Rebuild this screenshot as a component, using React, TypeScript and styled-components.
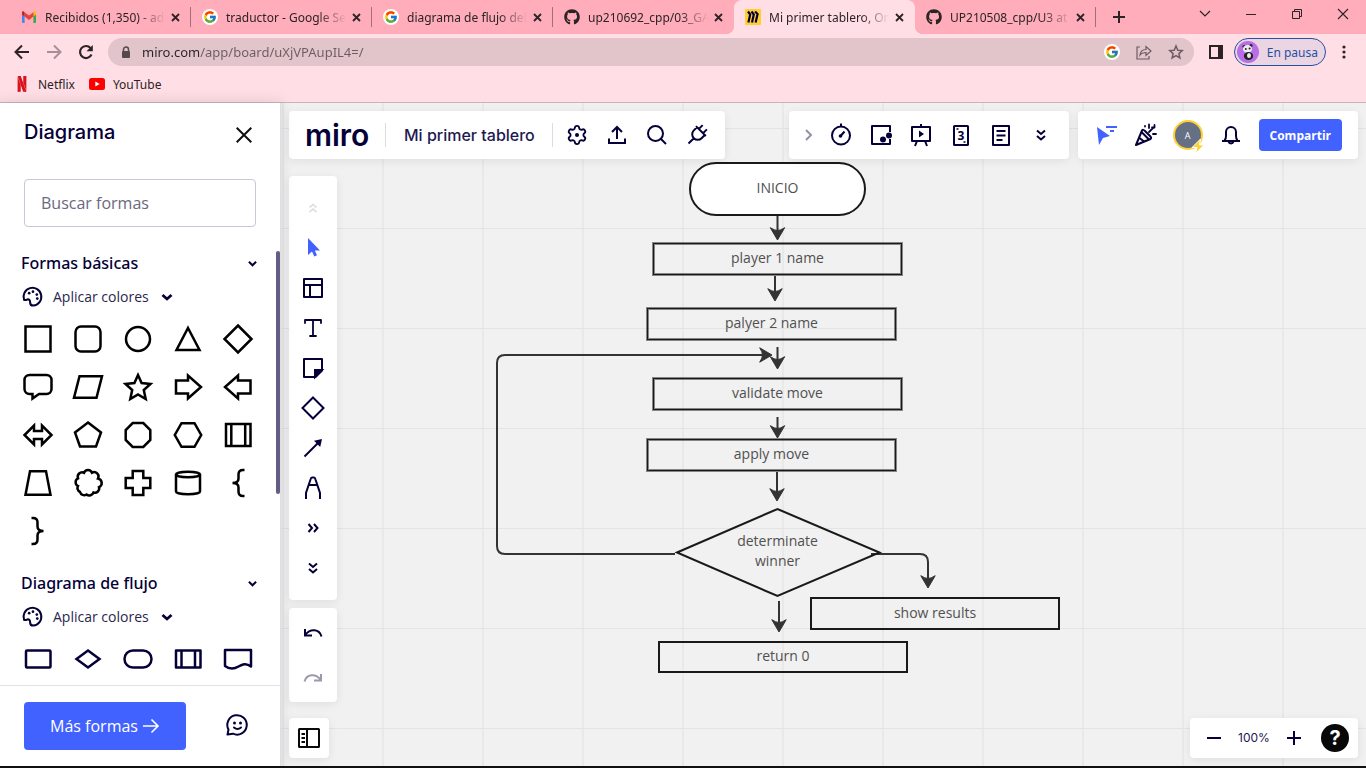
import React from 'react';
import styled, { createGlobalStyle, css } from 'styled-components';
import { FcGoogle } from 'react-icons/fc';
import { FaGithub } from 'react-icons/fa';
import { SiNetflix } from 'react-icons/si';

const ink = '#050038';
const blue = '#4262ff';
const uiFont = '"Open Sans", "Noto Sans", sans-serif';
const chromeFont = '"Noto Sans", "Open Sans", sans-serif';
const brandFont = 'Inter, "Open Sans", sans-serif';

const GlobalStyle = createGlobalStyle`
  *, *::before, *::after { box-sizing: border-box; }
  body { margin: 0; font-family: ${uiFont}; color: ${ink}; }
  button { border: 0; padding: 0; background: none; color: inherit; font: inherit; cursor: pointer; }
  a { color: inherit; text-decoration: none; }
  h1, h2 { margin: 0; }
  svg { display: block; flex: none; }
`;

/* ---------- page ---------- */

const Page = styled.div`
  display: flex;
  flex-direction: column;
  height: 100vh;
  min-height: 640px;
  border-bottom: 2px solid #101010;
  overflow: hidden;
`;

/* ---------- browser frame ---------- */

const Browser = styled.header`
  flex: none;
  background: #ffdfe5;
  border-bottom: 1px solid #c9b4bb;
  font-family: ${chromeFont};
  color: #2b2325;
`;

const TabStrip = styled.div`
  display: flex;
  height: 34px;
  padding-left: 10px;
  background: #ffacbb;
`;

const TabBox = styled.div<{ $active?: boolean; $divider?: boolean }>`
  position: relative;
  display: flex;
  align-items: center;
  flex: 0 1 181px;
  min-width: 0;
  padding: 0 8px 0 11px;
  ${p => p.$divider && css`
    &::after {
      content: '';
      position: absolute;
      right: 0;
      top: 7px;
      width: 1px;
      height: 20px;
      background: #a2707a;
    }
  `}
  ${p => p.$active && css`
    background: #ffdfe5;
    border-radius: 8px 8px 0 0;
    &::before, &::after {
      content: '';
      position: absolute;
      bottom: 0;
      width: 8px;
      height: 8px;
    }
    &::before { left: -8px; background: radial-gradient(circle at 0 0, transparent 8px, #ffdfe5 8px); }
    &::after { right: -8px; background: radial-gradient(circle at 100% 0, transparent 8px, #ffdfe5 8px); }
  `}
`;

const TabTitle = styled.button`
  display: flex;
  align-items: center;
  gap: 8px;
  flex: 1;
  min-width: 0;
  height: 34px;
  font-size: 12px;
  text-align: left;
`;

const TabText = styled.span`
  flex: 1;
  overflow: hidden;
  white-space: nowrap;
  mask-image: linear-gradient(90deg, #000 calc(100% - 28px), transparent);
`;

const Favicon = styled.span<{ $round?: boolean }>`
  display: flex;
  align-items: center;
  justify-content: center;
  flex: none;
  width: 16px;
  height: 16px;
  border-radius: ${p => (p.$round ? '50%' : '0')};
  background: ${p => (p.$round ? '#fff' : 'transparent')};
`;

const TinyButton = styled.button`
  display: flex;
  align-items: center;
  justify-content: center;
  width: 16px;
  height: 16px;
  margin-left: 2px;
`;

const NewTab = styled(TinyButton)`
  width: 28px;
  height: 34px;
  margin-left: 9px;
`;

const WindowButtons = styled.div`
  display: flex;
  margin-left: auto;
`;

const WindowButton = styled.button`
  display: flex;
  align-items: center;
  justify-content: center;
  width: 46px;
  height: 28px;
`;

const NavRow = styled.div`
  display: flex;
  align-items: center;
  height: 36px;
  padding: 0 4px 0 6px;
`;

const NavButton = styled.button<{ $w?: number }>`
  display: flex;
  align-items: center;
  justify-content: center;
  flex: none;
  width: ${p => p.$w ?? 32}px;
  height: 28px;
`;

const AddressBar = styled.label`
  display: flex;
  align-items: center;
  flex: 1;
  height: 28px;
  margin: 0 6px;
  padding: 0 2px 0 12px;
  border-radius: 14px;
  background: #e1c5ca;
`;

const AddressInput = styled.input`
  flex: 1;
  min-width: 0;
  margin-left: 10px;
  padding: 0;
  border: 0;
  outline: 0;
  font: 13px/20px ${chromeFont};
  color: transparent;
  background: linear-gradient(90deg, #2b2325 57px, #6d5b60 57px);
  -webkit-background-clip: text;
  background-clip: text;
`;

const Profile = styled.button`
  display: flex;
  align-items: center;
  gap: 8px;
  height: 28px;
  margin-left: 2px;
  padding: 0 7px 0 2px;
  border: 1px solid #2450a4;
  border-radius: 14px;
  background: #ecd5e2;
  color: #2450a4;
  font-size: 12px;
`;

const Bookmarks = styled.nav`
  display: flex;
  align-items: center;
  gap: 14px;
  height: 32px;
  padding: 0 14px 4px;
`;

const Bookmark = styled.a`
  display: flex;
  align-items: center;
  gap: 8px;
  font-size: 12px;
`;

/* ---------- shapes panel ---------- */

const Workspace = styled.div`
  display: flex;
  flex: 1;
  min-height: 0;
`;

const Panel = styled.aside`
  position: relative;
  z-index: 2;
  display: flex;
  flex-direction: column;
  flex: none;
  width: 280px;
  background: #fff;
  box-shadow: 1px 0 0 #dedee2, 0 0 12px 2px rgba(5, 0, 56, 0.1);
`;

const PanelHeader = styled.div`
  display: flex;
  align-items: center;
  justify-content: space-between;
  height: 60px;
  padding: 0 28px 0 24px;
`;

const PanelTitle = styled.h1`
  padding-bottom: 2px;
  font: 500 20px/28px ${brandFont};
`;

const CloseButton = styled.button`
  display: flex;
  align-items: center;
  justify-content: flex-end;
  width: 32px;
  height: 32px;
  margin-top: 4px;
`;

const Search = styled.input`
  height: 48px;
  margin: 16px 24px 20px;
  padding: 0 16px;
  border: 1px solid #c9c7da;
  border-radius: 4px;
  font: 16px/24px ${uiFont};
  color: ${ink};
  &::placeholder { color: #6b6880; opacity: 1; }
`;

const ShapeList = styled.div`
  position: relative;
  flex: 1;
  min-height: 0;
  overflow: hidden;
`;

const ScrollThumb = styled.div`
  position: absolute;
  top: 4px;
  right: 0;
  width: 4px;
  height: 243px;
  border-radius: 2px;
  background: #625d85;
`;

const Section = styled.section`
  padding: 0 21px 12px;
`;

const SectionHead = styled.button`
  display: flex;
  align-items: center;
  justify-content: space-between;
  width: 100%;
  height: 32px;
  padding-right: 2px;
  font-family: "Noto Sans", "Open Sans", sans-serif;
  font-size: 16px;
  font-weight: 500;
`;

const ApplyColors = styled.button`
  display: flex;
  align-items: center;
  gap: 9px;
  height: 36px;
  padding-bottom: 1px;
  font-size: 14px;
  color: #2a2650;
  svg { color: ${ink}; }
`;

const ShapeGrid = styled.div`
  display: grid;
  grid-template-columns: repeat(5, 50px);
  grid-auto-rows: 48px;
  margin: 0 -8px;
`;

const ShapeButton = styled.button`
  display: flex;
  align-items: center;
  justify-content: center;
`;

const PanelFooter = styled.div`
  display: flex;
  align-items: center;
  justify-content: space-between;
  flex: none;
  height: 81px;
  padding: 0 30px 0 24px;
  border-top: 1px solid #e2e1e8;
`;

const MoreShapes = styled.button`
  display: flex;
  align-items: center;
  justify-content: center;
  gap: 4px;
  width: 162px;
  height: 48px;
  border-radius: 4px;
  background: ${blue};
  color: #fff;
  font-size: 16px;
`;

/* ---------- board ---------- */

const Board = styled.main`
  position: relative;
  flex: 1;
  min-width: 0;
  overflow: hidden;
  background-color: #f1f1f1;
  background-image:
    linear-gradient(#e4e4e5 1px, transparent 1px),
    linear-gradient(90deg, #e9e9ea 2px, transparent 2px);
  background-size: 100px 100px;
  background-position: 2px 25px;
`;

const Connectors = styled.svg`
  position: absolute;
  left: 0;
  top: 0;
  width: 800px;
  height: 600px;
`;

const nodeLine = '#1a1a1a';
const softLine = 'rgba(26, 26, 26, 0.5)';

const Node = styled.div<{ $x: number; $y: number; $w: number; $h: number; $kind: 'pill' | 'soft' | 'solid' | 'plain' }>`
  position: absolute;
  left: ${p => p.$x}px;
  top: ${p => p.$y}px;
  width: ${p => p.$w}px;
  height: ${p => p.$h}px;
  display: flex;
  align-items: center;
  justify-content: center;
  padding-bottom: 2px;
  font-size: 14px;
  line-height: 20px;
  text-align: center;
  color: #505050;
  ${p => p.$kind === 'pill' && css`
    border: 2px solid ${nodeLine};
    border-radius: 27px;
    background: #fff;
  `}
  ${p => p.$kind === 'solid' && css`border: 2px solid ${nodeLine};`}
  ${p => p.$kind === 'soft' && css`
    border: 1px solid ${nodeLine};
    box-shadow: 0 0 0 1px ${softLine}, inset 0 0 0 1px ${softLine};
  `}
`;

const Overlay = styled.div`
  position: absolute;
  inset: 0;
  display: flex;
  flex-direction: column;
  padding: 8px 8px 8px 9px;
`;

const TopRow = styled.div`
  display: flex;
  gap: 9px;
  margin-bottom: 17px;
`;

const Spacer = styled.div`
  flex: 1;
`;

const Card = styled.div`
  display: flex;
  align-items: center;
  flex: none;
  border-radius: 4px;
  background: #fff;
  box-shadow: 0 2px 10px rgba(5, 0, 56, 0.08);
`;

const Bar = styled(Card)`
  height: 48px;
  padding: 0 8px;
`;

const ToolColumn = styled(Card)<{ $pad: number }>`
  flex-direction: column;
  width: 48px;
  padding: ${p => p.$pad}px 0;
  margin-bottom: 8px;
`;

const ToolButton = styled.button<{ $w?: number; $h?: number; $tone?: string }>`
  display: flex;
  align-items: center;
  justify-content: center;
  width: ${p => p.$w ?? 40}px;
  height: ${p => p.$h ?? 40}px;
  color: ${p => p.$tone ?? ink};
`;

const Logo = styled.a`
  padding: 0 16px 0 8px;
  font: 600 30px/40px ${brandFont};
`;

const Divider = styled.span`
  width: 1px;
  height: 24px;
  background: #dddce6;
`;

const BoardName = styled.button`
  min-width: 166px;
  padding: 0 16px;
  font: 500 16px/24px ${brandFont};
  color: #1d1950;
`;

const BoardActions = styled.div`
  display: flex;
  margin-left: 4px;
`;

const Avatar = styled.button`
  position: relative;
  width: 30px;
  height: 30px;
  margin: 0 8px 0 7px;
  border: 2px solid #ffd02f;
  border-radius: 50%;
  background: #667085;
  color: #fff;
  font-size: 9px;
  svg { position: absolute; right: -4px; bottom: -6px; }
`;

const ShareButton = styled.button`
  height: 32px;
  margin: 0 8px;
  padding: 0 11px;
  border-radius: 4px;
  background: ${blue};
  color: #fff;
  font-size: 12px;
  font-weight: 700;
`;

const BottomRow = styled.div`
  display: flex;
  justify-content: space-between;
  margin-top: auto;
`;

const SmallCard = styled(Card)`
  height: 40px;
`;

const ZoomLabel = styled.span`
  width: 40px;
  text-align: center;
  font: 12px/20px ${brandFont};
  color: #1d1950;
`;

const HelpButton = styled.button`
  width: 28px;
  height: 28px;
  margin: 0 9px;
  border-radius: 50%;
  background: #080808;
  color: #fff;
  font: 700 20px/28px ${brandFont};
`;

/* ---------- icons ---------- */

type IconProps = { size?: number; box?: number; stroke?: number; color?: string; round?: boolean; children: React.ReactNode };

const Icon = ({ size = 24, box = 24, stroke = 2, color = 'currentColor', round, children }: IconProps) => (
  <svg
    width={size}
    height={size}
    viewBox={`0 0 ${box} ${box}`}
    fill="none"
    stroke={color}
    strokeWidth={stroke}
    strokeLinecap={round ? 'round' : 'butt'}
    strokeLinejoin={round ? 'round' : 'miter'}
    aria-hidden="true"
  >
    {children}
  </svg>
);

const Cross = ({ size, stroke }: { size: number; stroke: number }) => (
  <Icon size={size} box={size} stroke={stroke}>
    <path d={`M1 1L${size - 1} ${size - 1}M${size - 1} 1L1 ${size - 1}`} />
  </Icon>
);

const SmallChevron = () => (
  <Icon size={9} box={10} stroke={2.2}><path d="M1 3l4 4 4-4" /></Icon>
);

const GmailIcon = () => (
  <svg width="16" height="16" viewBox="0 0 16 16" aria-hidden="true">
    <path d="M1 4.5h2.6V14H2a1 1 0 0 1-1-1z" fill="#4285f4" />
    <path d="M12.4 4.5H15V13a1 1 0 0 1-1 1h-1.6z" fill="#34a853" />
    <path d="M12.4 3.2l.8-.7c.8-.6 1.8 0 1.8 1v1.9L12.4 7.5z" fill="#fbbc04" />
    <path d="M3.6 3.2l-.8-.7C2 1.9 1 2.5 1 3.5v1.9l2.6 2.1z" fill="#c5221f" />
    <path d="M3.6 3.2L8 6.6l4.4-3.4v4.3L8 11 3.6 7.5z" fill="#ea4335" />
  </svg>
);

const MiroIcon = () => (
  <svg width="16" height="16" viewBox="0 0 16 16" fill="none" stroke={ink} strokeWidth="2.2" aria-hidden="true">
    <rect width="16" height="16" rx="1" fill="#ffd02f" stroke="none" />
    <path d="M3 2.5L5.2 5.5L3.400 13.500M6.500 2.500L8.800 5.500L7 13.500M10 2.500L12.600 5L10.600 13.500" />
  </svg>
);

const PandaIcon = () => (
  <svg width="22" height="22" viewBox="0 0 22 22" aria-hidden="true">
    <circle cx="11" cy="11" r="11" fill="#b86ee6" />
    <circle cx="7" cy="5.5" r="1.6" fill="#222" />
    <circle cx="14" cy="4.5" r="1.6" fill="#222" />
    <ellipse cx="10.5" cy="8" rx="4.5" ry="3.9" fill="#eee" />
    <ellipse cx="11.5" cy="15" rx="4.6" ry="4" fill="#222" />
    <ellipse cx="12" cy="14.5" rx="2" ry="2.6" fill="#eee" />
    <circle cx="8.8" cy="8" r="1" fill="#222" />
    <circle cx="12.6" cy="7.6" r="1" fill="#222" />
  </svg>
);

const PaletteIcon = () => (
  <Icon size={23} stroke={2.1} round>
    <path d="M3.2 15.5A9.300 9.300 0 1 1 12.800 21.500C10 21.500 9.500 20.300 9.500 18c0-2.500-1.400-3.400-3-2.800-1 .3-1.500.8-3.300.3z" />
    <g fill="currentColor" stroke="none">
      <circle cx="8.500" cy="8.500" r="1.400" /><circle cx="12.500" cy="7" r="1.400" />
      <circle cx="16.500" cy="10" r="1.400" /><circle cx="17" cy="14.200" r="1.400" />
    </g>
  </Icon>
);

const BoldChevron = () => (
  <Icon size={18} box={18} stroke={2.8}><path d="M4.500 7L9 11l4.500-4" /></Icon>
);

const DoubleDown = () => (
  <Icon size={12} box={12} stroke={2}><path d="M2 1.500l4 3.500 4-3.500M2 7l4 3.500L10 7" /></Icon>
);

/* ---------- data ---------- */

const basicShapes: [string, React.ReactNode][] = [
  ['Cuadrado', <rect x="3.500" y="3.500" width="25" height="25" />],
  ['Cuadrado redondeado', <rect x="3.500" y="3.500" width="25" height="25" rx="5.500" />],
  ['Círculo', <circle cx="16" cy="16" r="12" />],
  ['Triángulo', <path d="M16 5L27.500 27H4.500z" />],
  ['Rombo', <path d="M16 2.500l13.500 13.500-13.500 13.500L2.500 16z" />],
  ['Globo', <path d="M7.500 4h17a5 5 0 0 1 5 5v9a5 5 0 0 1-5 5H17l-6.500 4.500V23h-3a5 5 0 0 1-5-5V9a5 5 0 0 1 5-5z" />],
  ['Paralelogramo', <path d="M7.500 5.200H30L24.500 26.800H2z" />],
  ['Estrella', <path d="M16 4l3.600 8 8.900 1-6.700 6 1.900 9-7.700-4.600L8.300 28l1.900-9-6.700-6 8.900-1z" />],
  ['Flecha derecha', <path d="M4 9.500h12V4.500l13 11.500L16 27.500v-5H4z" />],
  ['Flecha izquierda', <path d="M28.500 9.500H16V4.500L3 16l13 11.500v-5h12.500z" />],
  ['Flecha doble', <path d="M12 12V6.500L2.500 16l9.500 9.500V20h8v5.500L29.500 16 20 6.500V12z" />],
  ['Pentágono', <path d="M16 3.500l13 10L24 27.500H8L3 13.500z" />],
  ['Octágono', <path d="M10.700 4h10.600l7 7v10l-7 7H10.700l-7-7V11z" />],
  ['Hexágono', <path d="M9.500 4.200h13l6.700 11.800-6.700 11.800h-13L2.800 16z" />],
  ['Proceso', <path d="M4 5h24.500v22H4zM9.300 5v22M23.200 5v22" />],
  ['Trapecio', <path d="M8 4.300h16l4.500 23.400h-25z" />],
  ['Nube', <path d="M12 5.800a4.300 4.300 0 0 1 8 0 4.300 4.300 0 0 1 6 5.700 4.600 4.600 0 0 1 1 8.700 4.300 4.300 0 0 1-5.500 5.300 4.500 4.500 0 0 1-7 2A4.300 4.300 0 0 1 8 25a4.300 4.300 0 0 1-2-6 4.300 4.300 0 0 1 0-7.700 4.400 4.400 0 0 1 6-5.500z" />],
  ['Cruz', <path d="M10.700 4h10.600v7h7v10h-7v7H10.700v-7h-7V11h7z" />],
  ['Cilindro', <g><ellipse cx="16" cy="7.500" rx="12" ry="2.800" /><path d="M4 7.500v17c0 3.600 24 3.600 24 0v-17" /></g>],
  ['Llave izquierda', <path d="M22.500 3h-1.500q-4.500 0-4.500 4.500v4q0 4.500-6 4.500 6 0 6 4.500v4q0 4.500 4.500 4.500h1.500" />],
  ['Llave derecha', <path d="M9.500 3H11q4.500 0 4.500 4.500v4q0 4.500 6 4.500-6 0-6 4.500v4q0 4.500-4.500 4.500H9.500" />],
];

const flowShapes: [string, React.ReactNode][] = [
  ['Rectángulo', <rect x="4" y="7.500" width="24.500" height="17" rx="1" />],
  ['Decisión', <path d="M16 7.500l11.500 8.500L16 24.500 4.500 16z" />],
  ['Terminador', <rect x="2.500" y="7.500" width="27" height="17" rx="8.500" />],
  ['Proceso predefinido', <path d="M4 7.500h24.500v17H4zM9.500 7.500v17M23 7.500v17" strokeLinejoin="round" />],
  ['Documento', <path d="M3 7h26v16.500c-5-4-9-2-12.500 0-5 3-9.500 2.500-13.500-.5z" strokeLinejoin="round" />],
];

const tabs = [
  { title: 'Recibidos (1,350) - adr', icon: <Favicon><GmailIcon /></Favicon>, divider: true },
  { title: 'traductor - Google Sea', icon: <Favicon $round><FcGoogle size={14} /></Favicon>, divider: true },
  { title: 'diagrama de flujo del j', icon: <Favicon $round><FcGoogle size={14} /></Favicon>, divider: true },
  { title: 'up210692_cpp/03_GA', icon: <Favicon><FaGithub size={16} /></Favicon> },
  { title: 'Mi primer tablero, Onl', icon: <Favicon><MiroIcon /></Favicon>, active: true },
  { title: 'UP210508_cpp/U3 at', icon: <Favicon><FaGithub size={16} /></Favicon>, divider: true },
];

const sideTools: [string, React.ReactNode, string?][] = [
  ['Subir', <Icon size={10} box={10} stroke={1.8}><path d="M1.500 4.500L5 1.500l3.500 3M1.500 9L5 6l3.500 3" /></Icon>, '#e1e0e7'],
  ['Seleccionar', <Icon><path d="M7 2v17l4-3.500 2.300 5 2.700-1.200-2.200-4.800H19z" fill={blue} stroke="none" /></Icon>],
  ['Plantillas', <Icon><path d="M3 3h18v18H3zM3 9h18M9 9v12" strokeLinejoin="round" /></Icon>],
  ['Texto', <Icon stroke={1.8} round><path d="M4 7V4h16v3M12 4v16M9 20h6" /></Icon>],
  ['Nota adhesiva', <Icon><path d="M3 3h18v11.500L14.500 21H3z" strokeLinejoin="round" /><path d="M21 14h-7v7z" fill="currentColor" /></Icon>],
  ['Formas', <Icon><path d="M12 1.500L22.500 12 12 22.500 1.500 12z" /></Icon>],
  ['Línea de conexión', <Icon><path d="M3.500 20.500L18 6" /><path d="M21 3l-1.800 8L13 4.800z" fill="currentColor" stroke="none" /></Icon>],
  ['Lápiz', <Icon><path d="M5 23v-6L9.500 3.500Q10 1.500 11 1.500h2q1 0 1.500 2L19 17v6M8.500 9h7" /></Icon>],
  ['Más herramientas', <Icon size={12} box={12}><path d="M1.500 2l3.500 4-3.500 4M7 2l3.500 4L7 10" /></Icon>],
  ['Más aplicaciones', <DoubleDown />],
];

const boardActions: [string, React.ReactNode][] = [
  ['Configuración', <Icon size={22}><path d="M9.671 4.136a2.34 2.34 0 0 1 4.659 0 2.34 2.34 0 0 0 3.319 1.915 2.34 2.34 0 0 1 2.33 4.033 2.34 2.34 0 0 0 0 3.831 2.34 2.34 0 0 1-2.33 4.033 2.34 2.34 0 0 0-3.319 1.915 2.34 2.34 0 0 1-4.659 0 2.34 2.34 0 0 0-3.32-1.915 2.34 2.34 0 0 1-2.33-4.033 2.34 2.34 0 0 0 0-3.831A2.34 2.34 0 0 1 6.35 6.051a2.34 2.34 0 0 0 3.319-1.915" /><circle cx="12" cy="12" r="2.200" fill="currentColor" stroke="none" /></Icon>],
  ['Exportar', <Icon><path d="M4 15.500V20h16v-4.500M12 16V4.500M7 9l5-5 5 5" /></Icon>],
  ['Buscar', <Icon><circle cx="10.500" cy="10.500" r="7.500" /><path d="M16 16l5 5" /></Icon>],
  ['Integraciones', <Icon><g transform="rotate(45 12 12)"><path d="M9 6V1M15 6V1M5 6.500h14M6.500 6.500V11a5.500 5.500 0 0 0 11 0V6.500M12 16.500V24" /></g></Icon>],
];

const meetingTools: [string, React.ReactNode][] = [
  ['Temporizador', <Icon><circle cx="12" cy="12.500" r="9" /><path d="M12 4V0.500M12 12.500l3.500-4" /><circle cx="11.500" cy="13" r="1.800" fill="currentColor" stroke="none" /></Icon>],
  ['Votación', <Icon><path d="M21 9V3H3v18h18v-5" strokeLinejoin="round" /><circle cx="14" cy="16.500" r="3" fill="currentColor" stroke="none" /><circle cx="20" cy="12.500" r="3" fill="currentColor" stroke="none" /></Icon>],
  ['Presentación', <Icon><path d="M3 4h18v14H3zM12 4V1M8 18l-2 5M16 18l2 5" strokeLinejoin="round" /><path d="M10 7.500v7l5-3.500z" fill="currentColor" stroke="none" /></Icon>],
  ['Estimación', <Icon><rect x="5" y="3" width="14" height="19" rx="0.500" /><path d="M7.500 6h2M14.500 19h2" strokeWidth="1.500" /><text x="12" y="17" textAnchor="middle" fontFamily="Open Sans, sans-serif" fontSize="12" fontWeight="700" fill="currentColor" stroke="none">3</text></Icon>],
  ['Notas', <Icon><path d="M4 3h16v19H4zM7.500 8h9M7.500 12.500h9M7.500 17h6" strokeLinejoin="round" /></Icon>],
  ['Más', <DoubleDown />],
];

/* Board coordinates, measured from the board's top left corner. */
const nodes: { text: string; x: number; y: number; w: number; h: number; kind: 'pill' | 'soft' | 'solid' | 'plain' }[] = [
  { text: 'INICIO', x: 409, y: 59, w: 177, h: 54, kind: 'pill' },
  { text: 'player 1 name', x: 373, y: 140, w: 249, h: 32, kind: 'soft' },
  { text: 'palyer 2 name', x: 367, y: 205, w: 249, h: 32, kind: 'soft' },
  { text: 'validate move', x: 373, y: 275, w: 249, h: 32, kind: 'soft' },
  { text: 'apply move', x: 367, y: 336, w: 249, h: 32, kind: 'soft' },
  { text: 'determinate winner', x: 447, y: 426, w: 101, h: 46, kind: 'plain' },
  { text: 'show results', x: 530, y: 494, w: 250, h: 33, kind: 'solid' },
  { text: 'return 0', x: 378, y: 538, w: 250, h: 32, kind: 'solid' },
];

/* Vertical arrows: x, start y, tip y. */
const downArrows = [
  [497.5, 113, 137],
  [495, 173, 198],
  [497.5, 244, 266],
  [497.5, 314, 335],
  [497, 369, 398],
  [499, 498, 529],
];

const ArrowHead = ({ x, y, turn = 0 }: { x: number; y: number; turn?: number }) => (
  <path
    d="M0 0L-7.200-12.300Q-3-9.500 0-9.500Q3-9.500 7.200-12.300Z"
    transform={`translate(${x} ${y}) rotate(${turn})`}
    fill="#333"
    stroke="#333"
    strokeWidth="1"
    strokeLinejoin="round"
  />
);

export default function App() {
  return (
    <Page>
      <GlobalStyle />
      <Browser>
        <TabStrip>
          {tabs.map(t => (
            <TabBox key={t.title} $active={t.active} $divider={t.divider}>
              <TabTitle>{t.icon}<TabText>{t.title}</TabText></TabTitle>
              <TinyButton aria-label="Cerrar pestaña"><Cross size={9} stroke={1.8} /></TinyButton>
            </TabBox>
          ))}
          <NewTab aria-label="Nueva pestaña">
            <Icon size={12} box={12}><path d="M6 0v12M0 6h12" /></Icon>
          </NewTab>
          <WindowButtons>
            <WindowButton aria-label="Buscar pestañas"><Icon size={12} box={12} stroke={1.2}><path d="M1 3l5 5 5-5" /></Icon></WindowButton>
            <WindowButton aria-label="Minimizar"><Icon size={10} box={10} stroke={1}><path d="M0 5.500h10" /></Icon></WindowButton>
            <WindowButton aria-label="Restaurar"><Icon size={10} box={10} stroke={1}><path d="M.5 2.500h7v7h-7zM2.500 2.500v-2h7v7h-2" /></Icon></WindowButton>
            <WindowButton aria-label="Cerrar"><Cross size={12} stroke={1.1} /></WindowButton>
          </WindowButtons>
        </TabStrip>
        <NavRow>
          <NavButton aria-label="Atrás"><Icon size={16} box={16}><path d="M15 8H2M8 1.500L1.500 8 8 14.500" /></Icon></NavButton>
          <NavButton aria-label="Adelante"><Icon size={16} box={16} color="#a98f95"><path d="M1 8h13M8 1.500L14.500 8 8 14.500" /></Icon></NavButton>
          <NavButton aria-label="Recargar">
            <Icon size={16} box={16} stroke={2.2}><path d="M13.500 10.500A6 6 0 1 1 12.500 4" /><path d="M14.800 1v6.300H8.500z" fill="currentColor" stroke="none" /></Icon>
          </NavButton>
          <AddressBar>
            <Icon size={12} box={12} stroke={1.5} color="#55494c"><rect x="2" y="5" width="8" height="7" rx="1" fill="#55494c" stroke="none" /><path d="M3.500 6V3.500a2.500 2.500 0 0 1 5 0V6" /></Icon>
            <AddressInput aria-label="Dirección" readOnly value="miro.com/app/board/uXjVPAupIL4=/" />
            <NavButton aria-label="Traducir"><Favicon $round><FcGoogle size={14} /></Favicon></NavButton>
            <NavButton aria-label="Compartir página">
              <Icon size={16} box={16} stroke={1.2} color="#6d5b60"><path d="M4 3H1v12h12v-3M4 11c.5-4 3-5.500 6-5.500V2.500l5 4.500-5 4.500v-3C7.500 8.500 5.500 9 4 11z" /></Icon>
            </NavButton>
            <NavButton aria-label="Añadir a marcadores">
              <Icon size={16} box={16} stroke={1.5} color="#6d5b60"><path d="M8 2l1.800 4.200 4.500.4-3.400 3 1 4.400L8 11.700 4.100 14l1-4.400-3.400-3 4.500-.4z" /></Icon>
            </NavButton>
          </AddressBar>
          <NavButton aria-label="Panel lateral"><Icon size={14} box={14}><path d="M1 1h12v12H1z" /><path d="M9 1h4v12H9z" fill="currentColor" stroke="none" /></Icon></NavButton>
          <Profile><PandaIcon />En pausa</Profile>
          <NavButton aria-label="Menú" $w={36}>
            <svg width="4" height="14" viewBox="0 0 4 14" fill="currentColor" aria-hidden="true"><circle cx="2" cy="2" r="1.600" /><circle cx="2" cy="7" r="1.600" /><circle cx="2" cy="12" r="1.600" /></svg>
          </NavButton>
        </NavRow>
        <Bookmarks>
          <Bookmark href="#netflix"><SiNetflix size={16} color="#d8131c" />Netflix</Bookmark>
          <Bookmark href="#youtube">
            <svg width="16" height="12" viewBox="0 0 16 12" aria-hidden="true"><rect width="16" height="12" rx="2.500" fill="#f00" /><path d="M6.300 3.500v5l4.400-2.500z" fill="#fff" /></svg>
            YouTube
          </Bookmark>
        </Bookmarks>
      </Browser>

      <Workspace>
        <Panel>
          <PanelHeader>
            <PanelTitle>Diagrama</PanelTitle>
            <CloseButton aria-label="Cerrar panel"><Icon size={16} box={16} color="#101010"><path d="M.7.7l14.600 14.600M15.300.7L.7 15.300" /></Icon></CloseButton>
          </PanelHeader>
          <Search type="text" aria-label="Buscar formas" placeholder="Buscar formas" />
          <ShapeList>
            <Section>
              <SectionHead>Formas básicas<SmallChevron /></SectionHead>
              <ApplyColors><PaletteIcon />Aplicar colores<BoldChevron /></ApplyColors>
              <ShapeGrid>
                {basicShapes.map(([name, shape]) => (
                  <ShapeButton key={name} aria-label={name}><Icon size={32} box={32} stroke={2.5} color="#000">{shape}</Icon></ShapeButton>
                ))}
              </ShapeGrid>
            </Section>
            <Section>
              <SectionHead>Diagrama de flujo<SmallChevron /></SectionHead>
              <ApplyColors><PaletteIcon />Aplicar colores<BoldChevron /></ApplyColors>
              <ShapeGrid>
                {flowShapes.map(([name, shape]) => (
                  <ShapeButton key={name} aria-label={name}><Icon size={32} box={32} stroke={2.5}>{shape}</Icon></ShapeButton>
                ))}
              </ShapeGrid>
            </Section>
            <ScrollThumb />
          </ShapeList>
          <PanelFooter>
            <MoreShapes>
              Más formas
              <Icon size={18} box={18} stroke={1.6}><path d="M1 9h15M9.500 2.500L16 9l-6.500 6.500" /></Icon>
            </MoreShapes>
            <ToolButton $w={26} aria-label="Comentarios">
              <Icon size={26} box={26} round>
                <path d="M3.500 21.500l1-5a9.700 9.700 0 1 1 4.500 4.200z" />
                <path d="M10 14.500q3.500 3 7 0" />
                <g fill="currentColor" stroke="none"><circle cx="10.500" cy="10" r="1.500" /><circle cx="16.500" cy="10" r="1.500" /></g>
              </Icon>
            </ToolButton>
          </PanelFooter>
        </Panel>

        <Board>
          <Connectors viewBox="0 0 800 600" fill="none" stroke="#333" strokeWidth="2" aria-hidden="true">
            {downArrows.map(([x, from, tip]) => (
              <g key={from}>
                <path d={`M${x} ${from}V${tip - 8}`} />
                <ArrowHead x={x} y={tip} />
              </g>
            ))}
            <path d="M395 451H225Q217 451 217 443V260Q217 252 225 252H484" />
            <ArrowHead x={492} y={252} turn={-90} />
            <path d="M591 451H640Q648 451 648 459V478" />
            <ArrowHead x={648} y={485} />
            <path d="M397 449.500L497.500 406L599.500 449.500L497.500 493Z" stroke={nodeLine} />
          </Connectors>
          {nodes.map(n => (
            <Node key={n.text} $x={n.x} $y={n.y} $w={n.w} $h={n.h} $kind={n.kind}>{n.text}</Node>
          ))}

          <Overlay>
            <TopRow>
              <Bar>
                <Logo href="#inicio">miro</Logo>
                <Divider />
                <BoardName>Mi primer tablero</BoardName>
                <Divider />
                <BoardActions>
                  {boardActions.map(([name, icon]) => <ToolButton key={name} aria-label={name}>{icon}</ToolButton>)}
                </BoardActions>
              </Bar>
              <Spacer />
              <Bar>
                <ToolButton $w={24} $tone="#9391a8" aria-label="Ocultar"><Icon size={12} box={12}><path d="M3 1l5 5-5 5" /></Icon></ToolButton>
                {meetingTools.map(([name, icon]) => <ToolButton key={name} aria-label={name}>{icon}</ToolButton>)}
              </Bar>
              <Bar>
                <ToolButton $tone={blue} aria-label="Cursores">
                  <Icon><path d="M3 4l13 9-7 2-4 7z" fill="currentColor" stroke="none" /><path d="M12 4h11M16 8h4" /></Icon>
                </ToolButton>
                <ToolButton aria-label="Reacciones">
                  <Icon round>
                    <path d="M2 22L8 7.500q1-1.500 3 .500l5 5q2 2 .5 3zM5.500 15l4.500 3.500M8 9.500l6.500 6.500" />
                    <path d="M15 9l4-4M18 4.500h2.500V2M11 3v.5M15 1.500V5M19 11h3" strokeWidth="1.800" />
                  </Icon>
                </ToolButton>
                <Avatar aria-label="Cuenta">
                  A
                  <svg width="14" height="16" viewBox="0 0 14 16" aria-hidden="true"><path d="M9.500 1L1 9.500h5L4.500 15.500 13 7H8.500z" fill="#ffd02f" stroke="#fff" strokeWidth="1" /></svg>
                </Avatar>
                <ToolButton aria-label="Notificaciones">
                  <Icon><path d="M3 18h18M5.500 17.500Q7 16 7 13V9a5 5 0 0 1 10 0v4q0 3 1.500 4.500M9.500 18.500a2.600 2.600 0 0 0 5 0" strokeLinejoin="round" /></Icon>
                </ToolButton>
                <ShareButton>Compartir</ShareButton>
              </Bar>
            </TopRow>
            <ToolColumn $pad={12}>
              {sideTools.map(([name, icon, tone]) => <ToolButton key={name} $tone={tone} aria-label={name}>{icon}</ToolButton>)}
            </ToolColumn>
            <ToolColumn $pad={2}>
              <ToolButton $h={45} aria-label="Deshacer">
                <Icon><path d="M20.500 15.500C18.500 8 9.500 7 4.500 13.500M4 8v6.500h7" /></Icon>
              </ToolButton>
              <ToolButton $h={45} $tone="#9b99ae" aria-label="Rehacer">
                <Icon><path d="M3.500 15.500C5.500 8 14.500 7 19.500 13.500M20 8v6.500h-7" /></Icon>
              </ToolButton>
            </ToolColumn>
            <BottomRow>
              <SmallCard>
                <ToolButton $tone="#080808" aria-label="Marcos">
                  <Icon><rect x="2" y="3" width="20" height="18" rx="0.500" /><path d="M10 3v18M4.500 8H8M4.500 12H8M4.500 16H8" /></Icon>
                </ToolButton>
              </SmallCard>
              <SmallCard>
                <ToolButton $w={44} aria-label="Alejar"><Icon><path d="M7 12h14" /></Icon></ToolButton>
                <ZoomLabel>100%</ZoomLabel>
                <ToolButton $w={38} aria-label="Acercar"><Icon><path d="M6 12h14M13 5v14" /></Icon></ToolButton>
                <HelpButton aria-label="Ayuda">?</HelpButton>
              </SmallCard>
            </BottomRow>
          </Overlay>
        </Board>
      </Workspace>
    </Page>
  );
}
